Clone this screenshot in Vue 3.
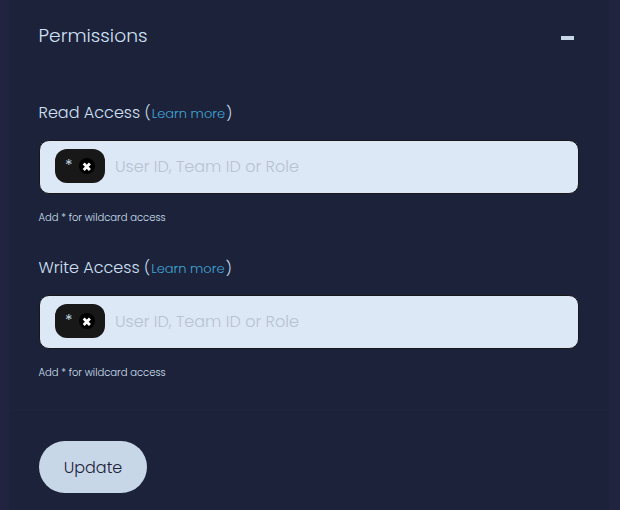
<script setup>
const fields = [
  { id: 'read', label: 'Read Access', tags: ['*'] },
  { id: 'write', label: 'Write Access', tags: ['*'] },
]
</script>

<template>
  <main class="page">
    <section class="card">
      <header class="head">
        <h2>Permissions</h2>
        <span class="collapse"></span>
      </header>
      <div class="fields">
        <div v-for="f in fields" :key="f.id" class="field">
          <label class="label">{{ f.label }} <span class="more">(<a class="link">Learn more</a>)</span></label>
          <div class="box">
            <span v-for="t in f.tags" :key="t" class="tag">
              <span class="star">{{ t }}</span>
              <span class="remove">
                <svg width="10" height="10" viewBox="0 0 10 10">
                  <path d="M1.7 2.5 7.9 9M7.9 2.5 1.7 9" stroke="#fff" stroke-width="2.8" />
                </svg>
              </span>
            </span>
            <span class="placeholder">User ID, Team ID or Role</span>
          </div>
          <p class="help">Add * for wildcard access</p>
        </div>
      </div>
      <footer class="foot">
        <button class="update">Update</button>
      </footer>
    </section>
  </main>
</template>

<style>
body { background: #20243f; }
</style>

<style scoped>
.page {
  height: 510px;
  box-sizing: border-box;
  padding: 0 11px 0 9px;
  overflow: hidden;
  background: #20243f;
  font-family: Poppins, Inter, "Liberation Sans", sans-serif;
  font-weight: 300;
  color: #cfe0f3;
}
.card {
  height: 510px;
  background: #1d223b;
}
.head {
  display: flex;
  justify-content: space-between;
  align-items: center;
  height: 71px;
  padding: 0 35px 0 29.5px;
}
h2 {
  margin: 0;
  font-size: 18.7px;
  font-weight: 300;
  line-height: 24px;
}
.collapse {
  width: 13px;
  height: 4px;
  margin-top: 5px;
  background: #c8d7e8;
}
.fields {
  height: 340px;
  padding: 29px 30px 0;
  box-sizing: border-box;
  border-bottom: 1px solid #20253f;
}
.field { height: 155px; }
.label {
  display: block;
  height: 25px;
  margin-left: -0.5px;
  font-size: 16px;
  line-height: 25px;
  white-space: nowrap;
}
.more { font-size: 14.4px; }
.link {
  margin: 0 1.2px;
  font-size: 13px;
  color: #3fa6d8;
}
.box {
  display: flex;
  align-items: center;
  height: 54px;
  margin-top: 15px;
  padding: 0 15px 2px;
  box-sizing: border-box;
  border: 1px solid #181818;
  border-radius: 10px;
  background: #dce8f6;
}
.tag {
  display: flex;
  align-items: center;
  width: 50px;
  height: 34px;
  box-sizing: border-box;
  padding-left: 10px;
  border-radius: 12px;
  background: #181818;
}
.star {
  width: 14px;
  font-size: 16px;
  line-height: 20px;
}
.remove {
  display: flex;
  align-items: center;
  justify-content: center;
  width: 16px;
  height: 16px;
  border-radius: 50%;
  background: #000;
}
.placeholder {
  margin-left: 10px;
  font-size: 16px;
  color: #b9c2d1;
  white-space: nowrap;
}
.help {
  margin: 16px 0 0 -0.5px;
  font-size: 10px;
  line-height: 16px;
}
.foot { padding: 30px 30px 0; }
.update {
  display: block;
  width: 108px;
  height: 52px;
  padding: 0;
  border: 0;
  border-radius: 26px;
  background: #c8d7e8;
  color: #1d223b;
  font: inherit;
  font-size: 16px;
}
</style>
